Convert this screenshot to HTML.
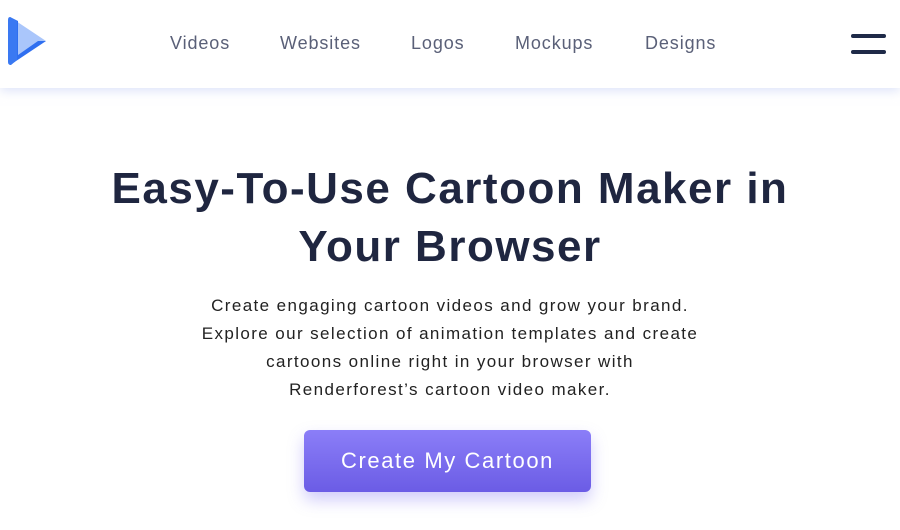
<!DOCTYPE html>
<html><head><style>
body{margin:0;width:900px;height:530px;background:#fff;font-family:"Liberation Sans",sans-serif;overflow:hidden;position:relative}
.hdr{position:absolute;left:0;top:0;width:900px;height:88px;background:#fff;box-shadow:0 3px 10px rgba(200,210,245,.6)}
.nav{position:absolute;top:33px;font-size:18px;color:#5a6078;letter-spacing:.9px}
.hb{position:absolute;left:851px;width:35px;height:4px;background:#1f2a48;border-radius:2px}
h1{position:absolute;top:160px;left:0;width:900px;margin:0;text-align:center;font-size:44px;line-height:58px;font-weight:bold;color:#1f2640;letter-spacing:1.5px}
p{position:absolute;top:292px;left:0;width:900px;margin:0;text-align:center;font-size:17px;line-height:28px;color:#222;letter-spacing:1.4px}
.btn{position:absolute;left:304px;top:430px;width:287px;height:62px;border-radius:6px;background:linear-gradient(#8b7ef8,#6b5ce5);color:#fff;font-size:22px;line-height:62px;text-align:center;letter-spacing:1.6px;box-shadow:0 8px 16px rgba(120,110,240,.35)}
</style></head><body>
<div class="hdr">
<svg style="position:absolute;left:8px;top:15px" width="42" height="52" viewBox="0 0 42 52">
<path d="M2 2 L38 26 L2 50 Z" fill="#aac6fb"/>
<path d="M2 2 L10 6 L10 40 L30 26 L38 26 L2 50 Z" fill="#2f6ff0"/>
<path d="M2 2 Q0 2 0 5 L0 47 Q0 50 3 50 L9 45 L9 6 Z" fill="#3a79f2"/>
</svg>
<div class="nav" style="left:170px">Videos</div>
<div class="nav" style="left:280px">Websites</div>
<div class="nav" style="left:411px">Logos</div>
<div class="nav" style="left:515px">Mockups</div>
<div class="nav" style="left:645px">Designs</div>
<div class="hb" style="top:34px"></div>
<div class="hb" style="top:50px"></div>
</div>
<h1>Easy-To-Use Cartoon Maker in<br>Your Browser</h1>
<p>Create engaging cartoon videos and grow your brand.<br>Explore our selection of animation templates and create<br>cartoons online right in your browser with<br>Renderforest’s cartoon video maker.</p>
<div class="btn">Create My Cartoon</div>
</body></html>
